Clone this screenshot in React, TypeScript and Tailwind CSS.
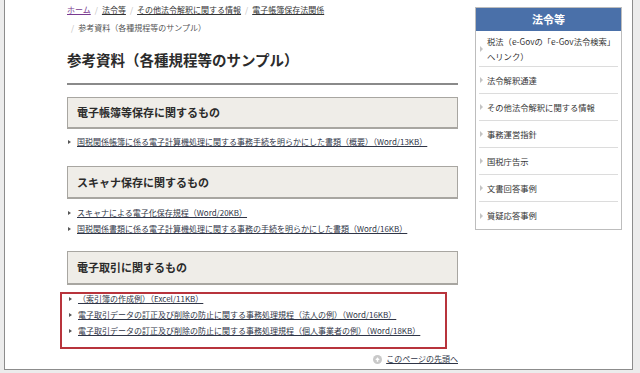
const FONT = "font-['Noto_Sans_CJK_JP','Noto_Sans',sans-serif]"

const Bullet = ({ light }: { light?: boolean }) => (
    <span
        className={
            light
                ? "inline-block w-0 h-0 border-y-[3px] border-y-transparent border-l-[3px] border-l-[#c4c4c4] mr-[4px] shrink-0"
                : "inline-block w-0 h-0 border-y-[2px] border-y-transparent border-l-[3px] border-l-[#555] mr-[6px] shrink-0"
        }
    />
)

const DocLink = ({ text }: { text: string }) => (
    <li className="flex items-center pl-[1px]">
        <Bullet />
        <a href="#" className="text-[#2f3547] underline underline-offset-[1px] decoration-[#2f3547] whitespace-nowrap">
            {text}
        </a>
    </li>
)

const SectionHead = ({ title, h }: { title: string, h: string }) => (
    <div className={"border border-[#a8a6a1] border-b-2 bg-[#efede8] pl-[9px] flex items-center " + h}>
        <h3 className="text-[11px] font-bold text-[#2b2b2b] leading-none">{title}</h3>
    </div>
)

const sideItems = [
    "法令解釈通達",
    "その他法令解釈に関する情報",
    "事務運営指針",
    "国税庁告示",
    "文書回答事例",
    "質疑応答事例",
]

const Sidebar = () => (
    <aside className="w-[147px] mt-[7px] self-start border border-[#bdbdbd] bg-white">
        <div className="h-[23px] bg-[#4a70a9] flex items-center justify-center">
            <span className="text-white font-bold text-[11px] leading-none">法令等</span>
        </div>
        <ul className="px-[3px] text-[8.3px] text-[#333]">
            <li className="h-[36px] border-b border-[#dcdcdc] flex items-center pl-[1px]">
                <Bullet light />
                <span className="leading-[15px] mt-[1px]">税法（e-Govの「e-Gov法令検索」<br />へリンク）</span>
            </li>
            {sideItems.map((t, i) => (
                <li
                    key={t}
                    className={
                        "h-[27px] flex items-center pl-[1px] " +
                        (i < sideItems.length - 1 ? "border-b border-[#dcdcdc]" : "")
                    }
                >
                    <Bullet light />
                    <span>{t}</span>
                </li>
            ))}
        </ul>
    </aside>
)

export default function App() {
    return (
        <div className={"w-[640px] h-[373px] bg-[#ececec] overflow-hidden " + FONT}>
            <div className="ml-[4px] w-[629px] h-[370px] bg-white border-x border-b border-[#8c8c8c] flex pl-[62px] pr-[10px]">
                <main className="w-[391px] shrink-0 text-[#333]">
                    {/* breadcrumb */}
                    <div className="text-[8px] leading-[18px] pt-[1px]">
                        <div className="flex items-center whitespace-nowrap">
                            <a href="#" className="text-[#7a3a8f] underline">ホーム</a>
                            <span className="text-[#bbb] mx-[4px]">/</span>
                            <a href="#" className="underline">法令等</a>
                            <span className="text-[#bbb] mx-[4px]">/</span>
                            <a href="#" className="underline">その他法令解釈に関する情報</a>
                            <span className="text-[#bbb] mx-[4px]">/</span>
                            <a href="#" className="underline">電子帳簿保存法関係</a>
                        </div>
                        <div className="flex items-center whitespace-nowrap pl-[4px]">
                            <span className="text-[#bbb] mr-[4px]">/</span>
                            <span className="text-[#555]">参考資料（各種規程等のサンプル）</span>
                        </div>
                    </div>

                    <h1 className="mt-[13px] text-[14.5px] leading-[20px] font-bold text-[#2b2b2b] pb-[13px] border-b-2 border-[#8a8a8a]">
                        参考資料（各種規程等のサンプル）
                    </h1>

                    <div className="mt-[12px]">
                        <SectionHead title="電子帳簿等保存に関するもの" h="h-[32px]" />
                        <ul className="mt-[5px] text-[8px] leading-[16px]">
                            <DocLink text="国税関係帳簿に係る電子計算機処理に関する事務手続を明らかにした書類（概要）（Word/13KB）" />
                        </ul>
                    </div>

                    <div className="mt-[16px]">
                        <SectionHead title="スキャナ保存に関するもの" h="h-[33px]" />
                        <ul className="mt-[6px] text-[8px] leading-[16px]">
                            <DocLink text="スキャナによる電子化保存規程（Word/20KB）" />
                            <DocLink text="国税関係書類に係る電子計算機処理に関する事務の手続を明らかにした書類（Word/16KB）" />
                        </ul>
                    </div>

                    <div className="mt-[14px]">
                        <SectionHead title="電子取引に関するもの" h="h-[34px]" />
                        <ul className="mt-[7px] -ml-[7px] w-[387px] border-2 border-[#b8343c] pl-[6px] pt-0 pb-[11px] flex flex-col gap-[6px] text-[8px] leading-[10px]">
                            <DocLink text="（索引簿の作成例）（Excel/11KB）" />
                            <DocLink text="電子取引データの訂正及び削除の防止に関する事務処理規程（法人の例）（Word/16KB）" />
                            <DocLink text="電子取引データの訂正及び削除の防止に関する事務処理規程（個人事業者の例）（Word/18KB）" />
                        </ul>
                    </div>

                    <div className="mt-[3px] flex justify-end items-center text-[8px] leading-[14px]">
                        <svg width="9" height="9" viewBox="0 0 10 10" className="mr-[4px]">
                            <circle cx="5" cy="5" r="5" fill="#c9c9c9" />
                            <path d="M5 2.5 L7.5 5.5 H5.8 V7.5 H4.2 V5.5 H2.5 Z" fill="#fff" />
                        </svg>
                        <a href="#" className="underline text-[#2f3547]">このページの先頭へ</a>
                    </div>
                </main>
                <div className="w-[17px] shrink-0" />
                <Sidebar />
            </div>
        </div>
    )
}
